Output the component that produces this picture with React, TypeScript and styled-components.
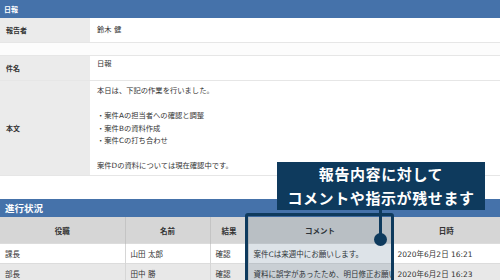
import React from "react";
import styled, { createGlobalStyle } from "styled-components";

const GlobalStyle = createGlobalStyle`
  body {
    margin: 0;
    background: #fff;
    font-family: "DejaVu Sans", "Noto Sans CJK JP", sans-serif;
    color: #333;
  }
`;

const Page = styled.div`
  position: relative;
  width: 500px;
  height: 280px;
  overflow: hidden;
  background: #fff;
`;

const SectionBar = styled.div<{ $size?: number }>`
  height: 18px;
  display: flex;
  align-items: center;
  padding-left: ${({ $size }) => ($size && $size > 8 ? 5 : 4)}px;
  background: #4572aa;
  color: #fff;
  font-family: "Noto Sans CJK JP", sans-serif;
  font-size: ${({ $size }) => $size || 7}px;
  font-weight: 700;
`;

const FormRow = styled.div<{ $height: number }>`
  display: grid;
  grid-template-columns: 90px 1fr;
  height: ${({ $height }) => $height}px;
  border-bottom: 1px solid #e6e6e6;
  box-sizing: border-box;
`;

const Spacer = styled.div`
  height: 13px;
  background: #fcfcfc;
  border-bottom: 1px solid #e6e6e6;
  box-sizing: border-box;
`;

const Label = styled.div`
  display: flex;
  align-items: center;
  padding-left: 6px;
  background: #ebebeb;
  font-size: 7px;
  font-weight: 700;
  color: #333;
`;

const Value = styled.div<{ $top?: number }>`
  display: flex;
  flex-direction: column;
  justify-content: ${({ $top }) => ($top !== undefined ? "flex-start" : "center")};
  padding: ${({ $top }) => $top ?? 0}px 0 0 7px;
  font-size: 7.3px;
  line-height: 12.5px;
  color: #333;
`;

const Line = styled.div`
  height: 12.5px;
  white-space: nowrap;
`;

const Gap = styled.div`
  height: 23px;
`;

const Table = styled.table`
  width: 500px;
  border-collapse: collapse;
  table-layout: fixed;
  font-size: 7.5px;
`;

const Th = styled.th`
  height: 26px;
  padding: 0;
  background: #d6d6d6;
  border-right: 1px solid #c4c4c4;
  font-weight: 700;
  color: #333;
  text-align: center;
  &:last-child {
    border-right: none;
  }
`;

const Tr = styled.tr<{ $alt?: boolean }>`
  background: ${({ $alt }) => ($alt ? "#e8e8e8" : "#fff")};
`;

const Td = styled.td<{ $h: number }>`
  height: ${({ $h }) => $h}px;
  padding: 0 0 0 5px;
  border-right: 1px solid #d6d6d6;
  border-top: 1px solid #dcdcdc;
  white-space: nowrap;
  overflow: hidden;
  color: #333;
  &:last-child {
    border-right: none;
  }
`;

const Highlight = styled.div`
  position: absolute;
  left: 245px;
  top: 213px;
  width: 149px;
  height: 90px;
  box-sizing: border-box;
  border: 3px solid #0e3a5d;
  border-radius: 3px;
  background: rgba(14, 58, 93, 0.14);
`;

const Callout = styled.div`
  position: absolute;
  left: 277px;
  top: 162px;
  width: 208px;
  height: 48px;
  display: flex;
  flex-direction: column;
  align-items: center;
  justify-content: center;
  background: #0e3a5d;
  color: #fff;
  font-family: "Noto Sans CJK JP", sans-serif;
  font-size: 15px;
  font-weight: 700;
  line-height: 24px;
  letter-spacing: 0.6px;
`;

const Connector = styled.div`
  position: absolute;
  left: 378.5px;
  top: 210px;
  width: 3px;
  height: 28px;
  background: #0e3a5d;
`;

const Dot = styled.div`
  position: absolute;
  left: 373.5px;
  top: 233px;
  width: 13px;
  height: 13px;
  border-radius: 50%;
  background: #0e3a5d;
`;

const body = [
  "本日は、下記の作業を行いました。",
  "",
  "・案件Aの担当者への確認と調整",
  "・案件Bの資料作成",
  "・案件Cの打ち合わせ",
  "",
  "案件Dの資料については現在確認中です。",
];

const rows = [
  { role: "課長", name: "山田 太郎", result: "確認", comment: "案件Cは来週中にお願いします。", date: "2020年6月2日 16:21" },
  { role: "部長", name: "田中 勝", result: "確認", comment: "資料に誤字があったため、明日修正お願いします。", date: "2020年6月2日 16:23" },
];

export default function App() {
  return (
    <Page>
      <GlobalStyle />
      <SectionBar>日報</SectionBar>
      <FormRow $height={25}>
        <Label>報告者</Label>
        <Value>鈴木 健</Value>
      </FormRow>
      <Spacer />
      <FormRow $height={25}>
        <Label>件名</Label>
        <Value $top={2}>日報</Value>
      </FormRow>
      <FormRow $height={95}>
        <Label>本文</Label>
        <Value $top={4}>
          {body.map((line, i) => (
            <Line key={i}>{line}</Line>
          ))}
        </Value>
      </FormRow>
      <Gap />
      <SectionBar $size={9.5}>進行状況</SectionBar>
      <Table>
        <colgroup>
          <col style={{ width: 125 }} />
          <col style={{ width: 85 }} />
          <col style={{ width: 38 }} />
          <col style={{ width: 144 }} />
          <col style={{ width: 108 }} />
        </colgroup>
        <thead>
          <tr>
            <Th>役職</Th>
            <Th>名前</Th>
            <Th>結果</Th>
            <Th>コメント</Th>
            <Th>日時</Th>
          </tr>
        </thead>
        <tbody>
          {rows.map((r, i) => (
            <Tr key={i} $alt={i % 2 === 1}>
              <Td $h={19}>{r.role}</Td>
              <Td $h={19}>{r.name}</Td>
              <Td $h={19}>{r.result}</Td>
              <Td $h={19}>{r.comment}</Td>
              <Td $h={19}>{r.date}</Td>
            </Tr>
          ))}
        </tbody>
      </Table>
      <Highlight />
      <Connector />
      <Dot />
      <Callout>
        <div>報告内容に対して</div>
        <div>コメントや指示が残せます</div>
      </Callout>
    </Page>
  );
}
